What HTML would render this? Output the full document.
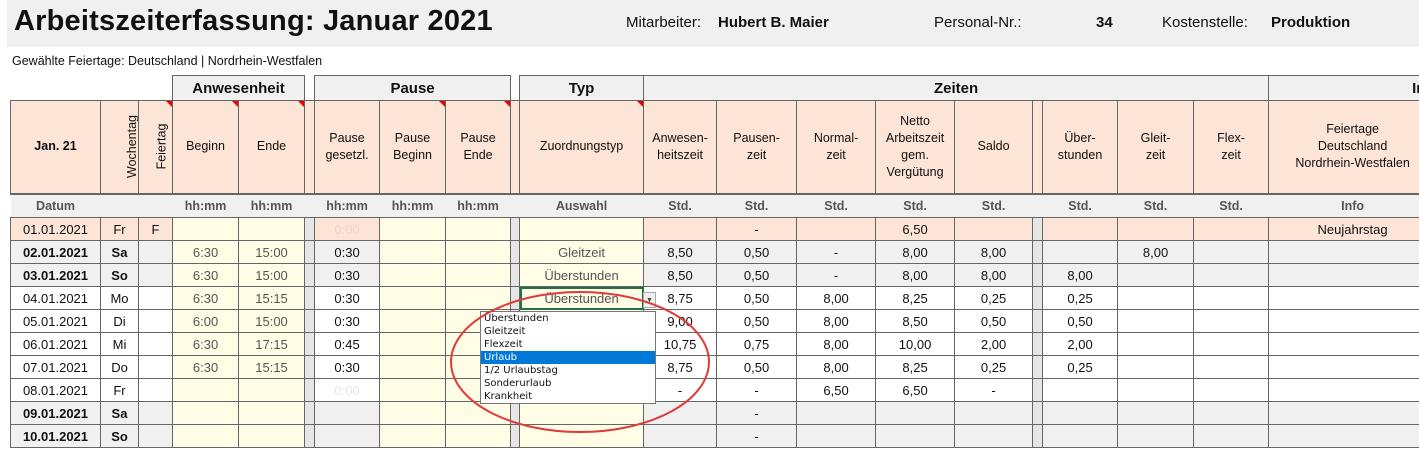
<!DOCTYPE html>
<html><head><meta charset="utf-8"><style>
*{box-sizing:border-box}
body{margin:0;width:1419px;height:450px;overflow:hidden;background:#fff;font-family:"Liberation Sans",Arial,sans-serif;color:#111;position:relative}
.band{position:absolute;left:7px;top:0;width:1412px;height:47px;background:#f0f0f0}
.t{position:absolute;font-size:29px;font-weight:bold;left:14px;top:5px;letter-spacing:0.2px}
.m{position:absolute;top:14px;font-size:15px}
.sub{position:absolute;left:12px;top:54px;font-size:12.5px}
table{position:absolute;left:10px;top:75px;width:1426px;border-collapse:collapse;table-layout:fixed;font-size:13px}
td{border:1px solid #666;text-align:center;padding:0;overflow:hidden;white-space:nowrap;position:relative}
tr.gh td{height:25px;font-weight:bold;font-size:15px;background:#f0f0f0}
tr.gh td.n{border:none;border-bottom:1px solid #666;background:#fff}
tr.h td{height:93px;background:#fce4d6;font-size:12.5px;white-space:normal;line-height:17px}
tr.u td{height:24px;background:#f0f0f0;color:#555;font-weight:bold;font-size:12.5px;border-left:none;border-right:none;border-top:2px solid #666}
tr.d td{height:23px}
.p{background:#fce4d6}.y{background:#fffde6}.g{background:#f0f0f0}.w{background:#fff}
.gp{background:#e6e6e6}
.b{font-weight:bold}
.c{color:#555}
.f{color:#f3d3c3}
.rot{display:inline-block;transform:rotate(-90deg);white-space:nowrap;font-size:12.5px}
.r::after{content:"";position:absolute;right:0;top:0;border-top:6px solid #e00;border-left:6px solid transparent}
.sel{outline:2px solid #217346;outline-offset:-2px}
.dd{position:absolute;left:480px;top:311px;width:176px;height:93px;background:#fff;border:1px solid #777;font-family:"DejaVu Sans",sans-serif;font-size:10px;line-height:13px;padding-top:0}
.dd div{padding-left:3px;height:13px}
.dd .hl{background:#0078d7;color:#fff}
.arr{position:absolute;left:643px;top:292px;width:13px;height:16px;background:#f0f0f0;border:1px solid #aaa;font-size:7px;text-align:center;line-height:15px;color:#444}
</style></head><body>
<div class="band"></div>
<div class="t">Arbeitszeiterfassung: Januar 2021</div>
<div class="m" style="left:626px">Mitarbeiter:</div>
<div class="m" style="left:718px;font-weight:bold">Hubert B. Maier</div>
<div class="m" style="left:934px">Personal-Nr.:</div>
<div class="m" style="left:1096px;font-weight:bold">34</div>
<div class="m" style="left:1162px">Kostenstelle:</div>
<div class="m" style="left:1271px;font-weight:bold">Produktion</div>
<div class="sub">Gewählte Feiertage: Deutschland | Nordrhein-Westfalen</div>
<table>
<colgroup><col style="width:90px"><col style="width:38px"><col style="width:34px"><col style="width:66px"><col style="width:66px"><col style="width:10px"><col style="width:65px"><col style="width:66px"><col style="width:65px"><col style="width:9px"><col style="width:124px"><col style="width:73px"><col style="width:80px"><col style="width:79px"><col style="width:79px"><col style="width:78px"><col style="width:10px"><col style="width:75px"><col style="width:76px"><col style="width:75px"><col style="width:168px"></colgroup>
<tr class="gh"><td class="n" colspan="3"></td><td colspan="2">Anwesenheit</td><td class="n" style="border-top:none"></td><td colspan="3">Pause</td><td class="n"></td><td>Typ</td><td colspan="9">Zeiten</td><td style="text-align:left;padding-left:143px">In</td></tr>
<tr class="h"><td class="b">Jan. 21</td><td><span class="rot">Wochentag</span></td><td class="r"><span class="rot">Feiertag</span></td><td class="r">Beginn</td><td class="r">Ende</td><td class="w"></td><td>Pause<br>gesetzl.</td><td class="r">Pause<br>Beginn</td><td class="r">Pause<br>Ende</td><td class="w"></td><td class="r">Zuordnungstyp</td><td>Anwesen-<br>heitszeit</td><td>Pausen-<br>zeit</td><td>Normal-<br>zeit</td><td>Netto<br>Arbeitszeit<br>gem.<br>Vergütung</td><td>Saldo</td><td class="w"></td><td>Über-<br>stunden</td><td>Gleit-<br>zeit</td><td>Flex-<br>zeit</td><td class="r">Feiertage<br>Deutschland<br>Nordrhein-Westfalen</td></tr>
<tr class="u"><td>Datum</td><td></td><td></td><td>hh:mm</td><td>hh:mm</td><td></td><td>hh:mm</td><td>hh:mm</td><td>hh:mm</td><td></td><td>Auswahl</td><td>Std.</td><td>Std.</td><td>Std.</td><td>Std.</td><td>Std.</td><td></td><td>Std.</td><td>Std.</td><td>Std.</td><td>Info</td></tr>
<tr class="d"><td class="p">01.01.2021</td><td class="p">Fr</td><td class="p">F</td><td class="y"></td><td class="y"></td><td class="gp"></td><td class="p f">0:00</td><td class="y"></td><td class="y"></td><td class="gp"></td><td class="y"></td><td class="p"></td><td class="p">-</td><td class="p"></td><td class="p">6,50</td><td class="p"></td><td class="gp"></td><td class="p"></td><td class="p"></td><td class="p"></td><td class="p">Neujahrstag</td></tr>
<tr class="d"><td class="g b">02.01.2021</td><td class="g b">Sa</td><td class="g"></td><td class="y c">6:30</td><td class="y c">15:00</td><td class="gp"></td><td class="g">0:30</td><td class="y"></td><td class="y"></td><td class="gp"></td><td class="y c">Gleitzeit</td><td class="g">8,50</td><td class="g">0,50</td><td class="g">-</td><td class="g">8,00</td><td class="g">8,00</td><td class="gp"></td><td class="g"></td><td class="g">8,00</td><td class="g"></td><td class="g"></td></tr>
<tr class="d"><td class="g b">03.01.2021</td><td class="g b">So</td><td class="g"></td><td class="y c">6:30</td><td class="y c">15:00</td><td class="gp"></td><td class="g">0:30</td><td class="y"></td><td class="y"></td><td class="gp"></td><td class="y c">Überstunden</td><td class="g">8,50</td><td class="g">0,50</td><td class="g">-</td><td class="g">8,00</td><td class="g">8,00</td><td class="gp"></td><td class="g">8,00</td><td class="g"></td><td class="g"></td><td class="g"></td></tr>
<tr class="d"><td>04.01.2021</td><td>Mo</td><td></td><td class="y c">6:30</td><td class="y c">15:15</td><td class="gp"></td><td>0:30</td><td class="y"></td><td class="y"></td><td class="gp"></td><td class="y c sel">Überstunden</td><td>8,75</td><td>0,50</td><td>8,00</td><td>8,25</td><td>0,25</td><td class="gp"></td><td>0,25</td><td></td><td></td><td></td></tr>
<tr class="d"><td>05.01.2021</td><td>Di</td><td></td><td class="y c">6:00</td><td class="y c">15:00</td><td class="gp"></td><td>0:30</td><td class="y"></td><td class="y"></td><td class="gp"></td><td class="y"></td><td>9,00</td><td>0,50</td><td>8,00</td><td>8,50</td><td>0,50</td><td class="gp"></td><td>0,50</td><td></td><td></td><td></td></tr>
<tr class="d"><td>06.01.2021</td><td>Mi</td><td></td><td class="y c">6:30</td><td class="y c">17:15</td><td class="gp"></td><td>0:45</td><td class="y"></td><td class="y"></td><td class="gp"></td><td class="y"></td><td>10,75</td><td>0,75</td><td>8,00</td><td>10,00</td><td>2,00</td><td class="gp"></td><td>2,00</td><td></td><td></td><td></td></tr>
<tr class="d"><td>07.01.2021</td><td>Do</td><td></td><td class="y c">6:30</td><td class="y c">15:15</td><td class="gp"></td><td>0:30</td><td class="y"></td><td class="y"></td><td class="gp"></td><td class="y"></td><td>8,75</td><td>0,50</td><td>8,00</td><td>8,25</td><td>0,25</td><td class="gp"></td><td>0,25</td><td></td><td></td><td></td></tr>
<tr class="d"><td>08.01.2021</td><td>Fr</td><td></td><td class="y"></td><td class="y"></td><td class="gp"></td><td style="color:#e6e6e6">0:00</td><td class="y"></td><td class="y"></td><td class="gp"></td><td class="y"></td><td>-</td><td>-</td><td>6,50</td><td>6,50</td><td>-</td><td class="gp"></td><td></td><td></td><td></td><td></td></tr>
<tr class="d"><td class="g b">09.01.2021</td><td class="g b">Sa</td><td class="g"></td><td class="y"></td><td class="y"></td><td class="gp"></td><td class="g"></td><td class="y"></td><td class="y"></td><td class="gp"></td><td class="y"></td><td class="g"></td><td class="g">-</td><td class="g"></td><td class="g"></td><td class="g"></td><td class="gp"></td><td class="g"></td><td class="g"></td><td class="g"></td><td class="g"></td></tr>
<tr class="d"><td class="g b">10.01.2021</td><td class="g b">So</td><td class="g"></td><td class="y"></td><td class="y"></td><td class="gp"></td><td class="g"></td><td class="y"></td><td class="y"></td><td class="gp"></td><td class="y"></td><td class="g"></td><td class="g">-</td><td class="g"></td><td class="g"></td><td class="g"></td><td class="gp"></td><td class="g"></td><td class="g"></td><td class="g"></td><td class="g"></td></tr>
</table>
<div class="arr">&#9660;</div>
<div class="dd"><div>Überstunden</div><div>Gleitzeit</div><div>Flexzeit</div><div class="hl">Urlaub</div><div>1/2 Urlaubstag</div><div>Sonderurlaub</div><div>Krankheit</div></div>
<svg style="position:absolute;left:0;top:0" width="1419" height="450"><ellipse cx="580" cy="362" rx="129" ry="70" fill="none" stroke="#e03a3a" stroke-width="2"/></svg>
</body></html>
